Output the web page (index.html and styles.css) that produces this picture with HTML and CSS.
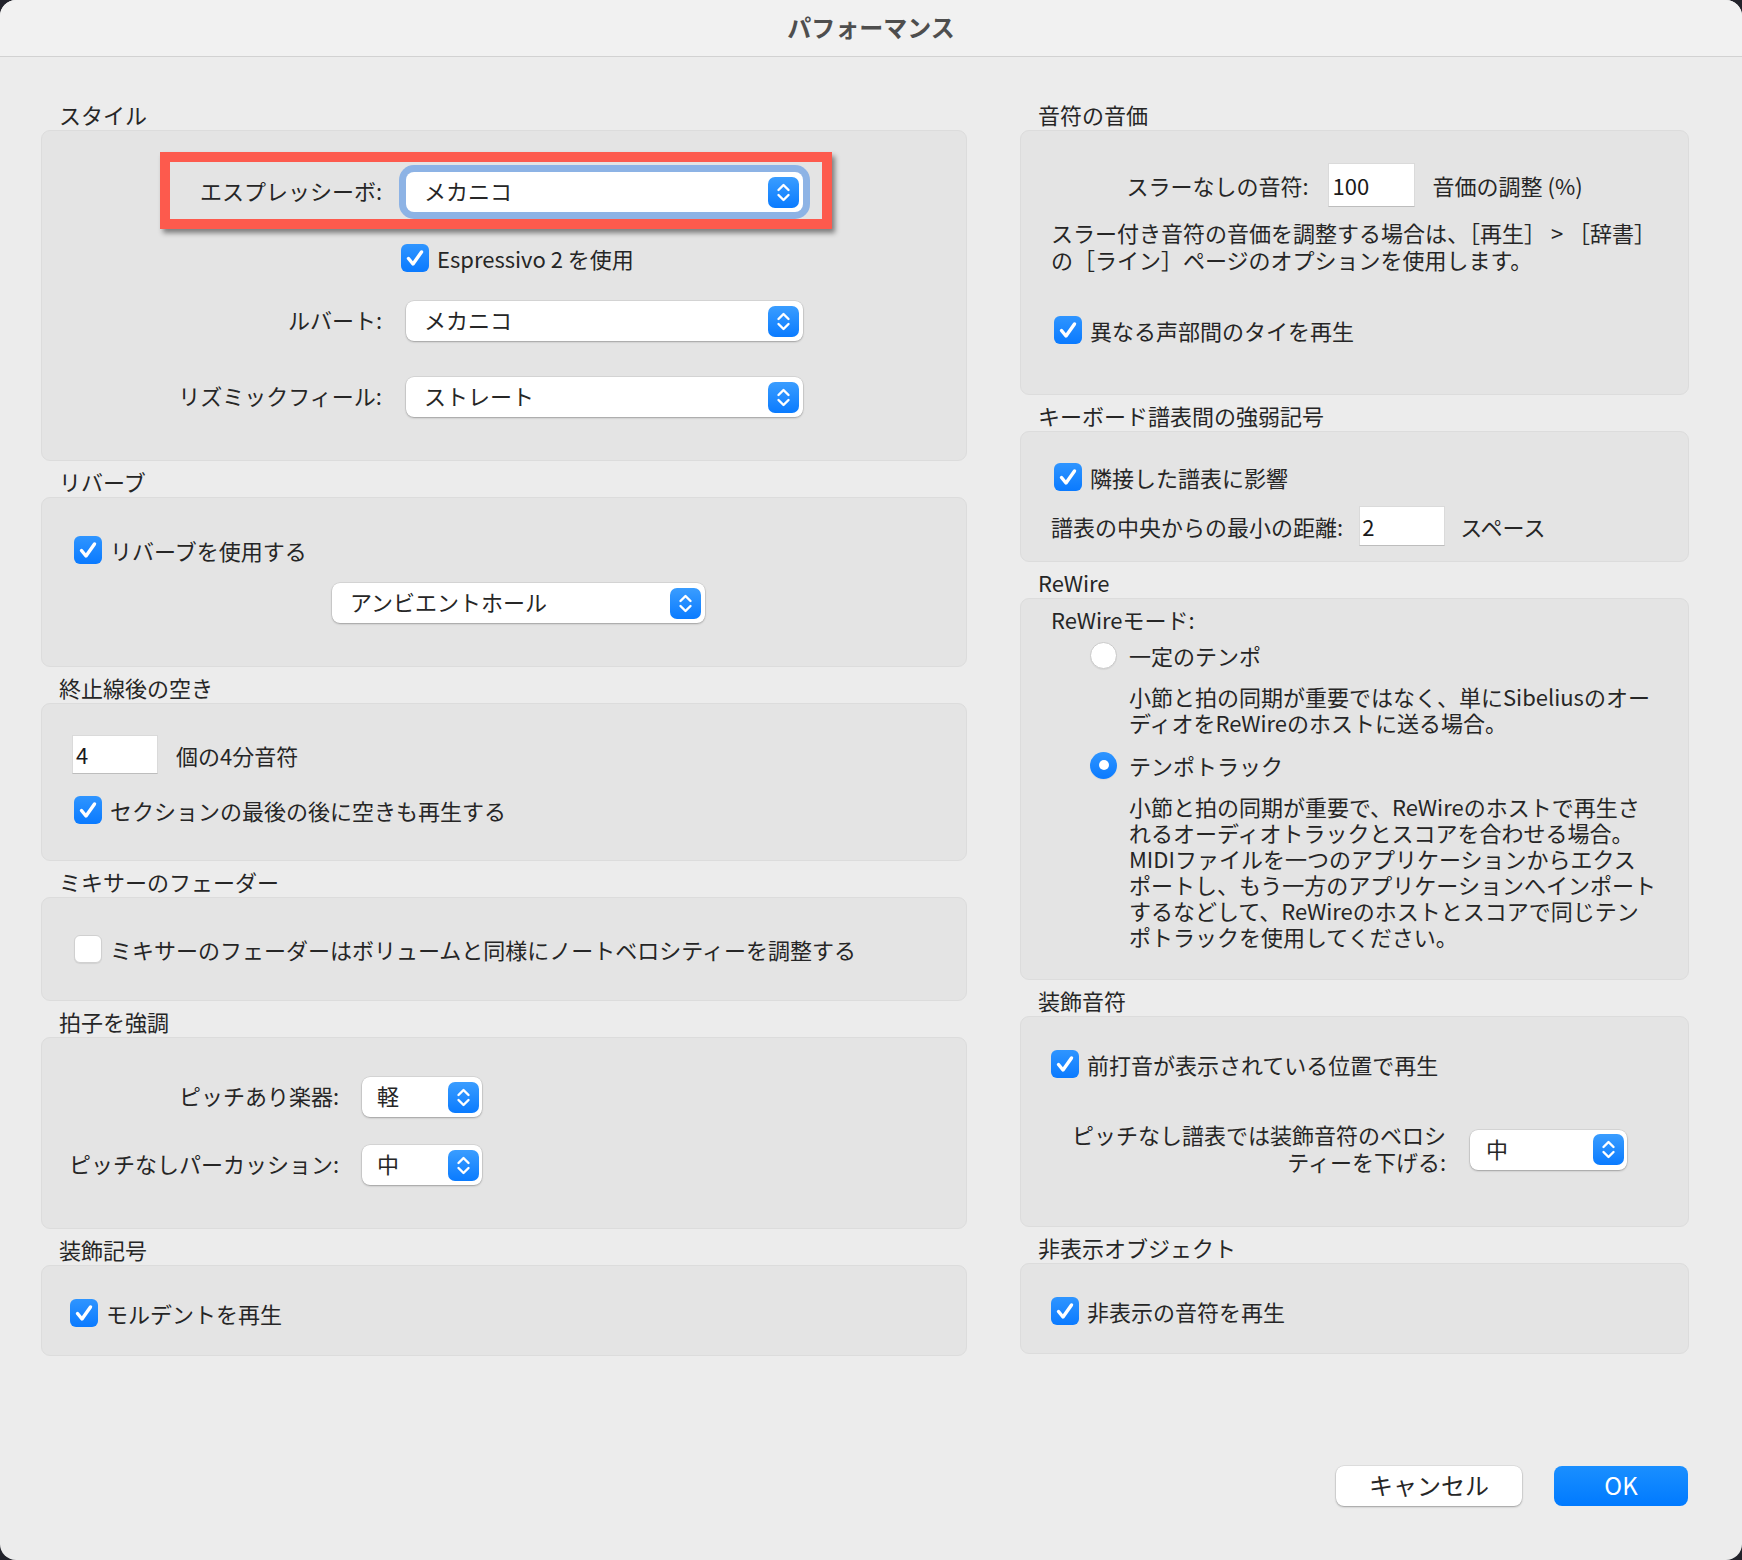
FILE: index.html
```html
<!DOCTYPE html>
<html lang="ja">
<head>
  <meta charset="utf-8">
  <title>パフォーマンス</title>
  <link rel="stylesheet" href="styles.css">
</head>
<body>
  <div class="window">
    <div class="titlebar">パフォーマンス</div>

    <div class="content">
      <!-- left column -->
      <div class="column">
        <div class="section-title">スタイル</div>
        <div class="group group-style">
          <div class="highlight"></div>
          <div class="form-grid style-grid">
            <span class="row-label">エスプレッシーボ:</span>
            <div class="select focused">
              <span>メカニコ</span>
              <span class="stepper"><svg width="31" height="31" viewBox="0 0 31 31"><polyline points="10.5,13 15.5,8 20.5,13"/><polyline points="10.5,18 15.5,23 20.5,18"/></svg></span>
            </div>

            <span></span>
            <label class="check espressivo">
              <span class="box checked"><svg width="28" height="28" viewBox="0 0 28 28"><path d="M7.5 14.5 L12 20 L20.5 8"/></svg></span>
              Espressivo 2 を使用
            </label>

            <span class="row-label">ルバート:</span>
            <div class="select">
              <span>メカニコ</span>
              <span class="stepper"><svg width="31" height="31" viewBox="0 0 31 31"><polyline points="10.5,13 15.5,8 20.5,13"/><polyline points="10.5,18 15.5,23 20.5,18"/></svg></span>
            </div>

            <span class="row-label">リズミックフィール:</span>
            <div class="select">
              <span>ストレート</span>
              <span class="stepper"><svg width="31" height="31" viewBox="0 0 31 31"><polyline points="10.5,13 15.5,8 20.5,13"/><polyline points="10.5,18 15.5,23 20.5,18"/></svg></span>
            </div>
          </div>
        </div>

        <div class="section-title">リバーブ</div>
        <div class="group group-reverb">
          <label class="check">
            <span class="box checked"><svg width="28" height="28" viewBox="0 0 28 28"><path d="M7.5 14.5 L12 20 L20.5 8"/></svg></span>
            リバーブを使用する
          </label>
          <div class="select reverb-select">
            <span>アンビエントホール</span>
            <span class="stepper"><svg width="31" height="31" viewBox="0 0 31 31"><polyline points="10.5,13 15.5,8 20.5,13"/><polyline points="10.5,18 15.5,23 20.5,18"/></svg></span>
          </div>
        </div>

        <div class="section-title">終止線後の空き</div>
        <div class="group group-gap">
          <div class="inline-row">
            <span class="field">4</span>
            <span>個の4分音符</span>
          </div>
          <label class="check gap-check">
            <span class="box checked"><svg width="28" height="28" viewBox="0 0 28 28"><path d="M7.5 14.5 L12 20 L20.5 8"/></svg></span>
            セクションの最後の後に空きも再生する
          </label>
        </div>

        <div class="section-title">ミキサーのフェーダー</div>
        <div class="group group-mixer">
          <label class="check">
            <span class="box"></span>
            ミキサーのフェーダーはボリュームと同様にノートベロシティーを調整する
          </label>
        </div>

        <div class="section-title">拍子を強調</div>
        <div class="group group-accent">
          <div class="form-grid accent-grid">
            <span class="row-label">ピッチあり楽器:</span>
            <div class="select small-select">
              <span>軽</span>
              <span class="stepper"><svg width="31" height="31" viewBox="0 0 31 31"><polyline points="10.5,13 15.5,8 20.5,13"/><polyline points="10.5,18 15.5,23 20.5,18"/></svg></span>
            </div>
            <span class="row-label">ピッチなしパーカッション:</span>
            <div class="select small-select">
              <span>中</span>
              <span class="stepper"><svg width="31" height="31" viewBox="0 0 31 31"><polyline points="10.5,13 15.5,8 20.5,13"/><polyline points="10.5,18 15.5,23 20.5,18"/></svg></span>
            </div>
          </div>
        </div>

        <div class="section-title">装飾記号</div>
        <div class="group group-single group-mordent">
          <label class="check">
            <span class="box checked"><svg width="28" height="28" viewBox="0 0 28 28"><path d="M7.5 14.5 L12 20 L20.5 8"/></svg></span>
            モルデントを再生
          </label>
        </div>
      </div>

      <!-- right column -->
      <div class="column">
        <div class="section-title">音符の音価</div>
        <div class="group group-duration">
          <div class="inline-row centered">
            <span>スラーなしの音符:</span>
            <span class="field field-tall">100</span>
            <span>音価の調整 (%)</span>
          </div>
          <p class="note">スラー付き音符の音価を調整する場合は、［再生］ > ［辞書］<br>の［ライン］ページのオプションを使用します。</p>
          <label class="check tie-check">
            <span class="box checked"><svg width="28" height="28" viewBox="0 0 28 28"><path d="M7.5 14.5 L12 20 L20.5 8"/></svg></span>
            異なる声部間のタイを再生
          </label>
        </div>

        <div class="section-title">キーボード譜表間の強弱記号</div>
        <div class="group group-keyboard">
          <label class="check tie-check">
            <span class="box checked"><svg width="28" height="28" viewBox="0 0 28 28"><path d="M7.5 14.5 L12 20 L20.5 8"/></svg></span>
            隣接した譜表に影響
          </label>
          <div class="inline-row distance-row">
            <span>譜表の中央からの最小の距離:</span>
            <span class="field">2</span>
            <span>スペース</span>
          </div>
        </div>

        <div class="section-title">ReWire</div>
        <div class="group group-rewire">
          <div class="rewire-heading">ReWireモード:</div>
          <label class="radio-row">
            <span class="radio"></span>
            一定のテンポ
          </label>
          <p class="desc">小節と拍の同期が重要ではなく、単にSibeliusのオー<br>ディオをReWireのホストに送る場合。</p>
          <label class="radio-row second">
            <span class="radio selected"></span>
            テンポトラック
          </label>
          <p class="desc">小節と拍の同期が重要で、ReWireのホストで再生さ<br>れるオーディオトラックとスコアを合わせる場合。<br>MIDIファイルを一つのアプリケーションからエクス<br>ポートし、もう一方のアプリケーションへインポート<br>するなどして、ReWireのホストとスコアで同じテン<br>ポトラックを使用してください。</p>
        </div>

        <div class="section-title">装飾音符</div>
        <div class="group group-grace">
          <label class="check">
            <span class="box checked"><svg width="28" height="28" viewBox="0 0 28 28"><path d="M7.5 14.5 L12 20 L20.5 8"/></svg></span>
            前打音が表示されている位置で再生
          </label>
          <div class="grace-row">
            <span class="grace-label">ピッチなし譜表では装飾音符のベロシ<br>ティーを下げる:</span>
            <div class="select grace-select">
              <span>中</span>
              <span class="stepper"><svg width="31" height="31" viewBox="0 0 31 31"><polyline points="10.5,13 15.5,8 20.5,13"/><polyline points="10.5,18 15.5,23 20.5,18"/></svg></span>
            </div>
          </div>
        </div>

        <div class="section-title">非表示オブジェクト</div>
        <div class="group group-single group-hidden">
          <label class="check">
            <span class="box checked"><svg width="28" height="28" viewBox="0 0 28 28"><path d="M7.5 14.5 L12 20 L20.5 8"/></svg></span>
            非表示の音符を再生
          </label>
        </div>
      </div>
    </div>

    <div class="footer">
      <button class="btn btn-cancel">キャンセル</button>
      <button class="btn btn-ok">OK</button>
    </div>
  </div>
</body>
</html>
```

FILE: styles.css
```css
html, body {
  margin: 0;
  padding: 0;
}

body {
  background-color: #22232b;
  font-family: "Noto Sans CJK JP", "Noto Sans", sans-serif;
  font-size: 22px;
  color: #262626;
}

.window {
  width: 1742px;
  height: 1560px;
  background-color: #ececec;
  border-radius: 16px;
  overflow: hidden;
  display: flex;
  flex-direction: column;
}

.titlebar {
  height: 56px;
  line-height: 54px;
  border-bottom: 1px solid #d2d2d2;
  background-color: #f1f1f1;
  text-align: center;
  font-size: 24px;
  font-weight: 700;
  color: #4e4e4e;
}

.content {
  display: grid;
  grid-template-columns: 926px 669px;
  column-gap: 53px;
  padding: 37px 53px 0 41px;
}

.column {
  display: flex;
  flex-direction: column;
}

.section-title {
  height: 36px;
  box-sizing: border-box;
  padding: 6px 0 0 18px;
  line-height: 28px;
}

.group {
  position: relative;
  background-color: #e4e4e4;
  border: 1px solid #dcdcdc;
  border-radius: 9px;
}

/* shared controls */

.row-label {
  text-align: right;
  white-space: nowrap;
}

.select {
  height: 40px;
  box-sizing: border-box;
  display: flex;
  align-items: center;
  justify-content: space-between;
  padding: 0 4px 0 18px;
  line-height: 36px;
  background-color: #fff;
  border-radius: 8px;
  box-shadow: 0 1px 2px rgba(0, 0, 0, 0.25), 0 0 0 0.5px rgba(0, 0, 0, 0.12);
}

.select > span:first-child {
  margin-bottom: 4px;
}

.select.focused {
  box-shadow: 0 0 0 7px rgba(70, 138, 230, 0.55);
}

.stepper {
  width: 31px;
  height: 31px;
  border-radius: 7px;
  background: linear-gradient(#3a9dff, #0a7bff);
  display: flex;
}

.stepper svg polyline {
  fill: none;
  stroke: #fff;
  stroke-width: 2.4;
  stroke-linecap: round;
  stroke-linejoin: round;
}

.check {
  display: flex;
  width: fit-content;
  align-items: center;
  gap: 8px;
  height: 28px;
  line-height: 28px;
  white-space: nowrap;
}

.box {
  width: 28px;
  height: 28px;
  box-sizing: border-box;
  border-radius: 6px;
  background-color: #fff;
  border: 1px solid #d0d0d0;
  box-shadow: 0 1px 1px rgba(0, 0, 0, 0.08);
  flex-shrink: 0;
}

.box.checked {
  border: none;
  background: linear-gradient(#2f95ff, #0a7aff);
  box-shadow: none;
}

.box svg path {
  fill: none;
  stroke: #fff;
  stroke-width: 3.4;
  stroke-linecap: round;
  stroke-linejoin: round;
}

.field {
  display: inline-block;
  width: 86px;
  height: 39px;
  box-sizing: border-box;
  padding-left: 3px;
  line-height: 37px;
  background-color: #fff;
  border: 1px solid #dadada;
  border-bottom-color: #bdbdbd;
  color: #1a1a1a;
}

.inline-row {
  display: flex;
  align-items: center;
  gap: 18px;
  white-space: nowrap;
}

.form-grid {
  display: grid;
}

/* スタイル */

.group-style {
  padding: 41px 0 43px 0;
}

.style-grid {
  grid-template-columns: 340px 397px;
  grid-template-rows: 72px 57px 76px 40px;
  column-gap: 24px;
}

.style-grid .row-label {
  line-height: 36px;
}

.espressivo {
  margin-left: -5px;
}

.highlight {
  position: absolute;
  left: 118px;
  top: 21px;
  width: 672px;
  height: 77px;
  box-sizing: border-box;
  border: 10px solid #fd5a4d;
  box-shadow: 3px 4px 5px rgba(0, 0, 0, 0.45);
  pointer-events: none;
}

/* リバーブ */

.group-reverb {
  display: flex;
  flex-direction: column;
  align-items: flex-start;
  padding: 38px 0 43px 32px;
}

.reverb-select {
  width: 373px;
  margin: 19px 0 0 258px;
}

/* 終止線後の空き */

.group-gap {
  display: flex;
  flex-direction: column;
  align-items: flex-start;
  padding: 31px 0 36px 30px;
}

.gap-check {
  margin: 22px 0 0 2px;
}

/* ミキサー */

.group-mixer {
  padding: 37px 0 37px 32px;
}

/* 拍子を強調 */

.group-accent {
  padding: 39px 0 43px 0;
}

.accent-grid {
  grid-template-columns: 297px 120px;
  column-gap: 23px;
  row-gap: 28px;
  align-items: center;
}

.accent-grid .row-label {
  padding-bottom: 4px;
}

.small-select {
  padding-left: 15px;
  padding-right: 3px;
}

/* single checkbox groups */

.group-single {
  padding: 33px 0 28px 28px;
}

.group-hidden {
  padding-left: 30px;
}

/* 音符の音価 */

.group-duration {
  display: flex;
  flex-direction: column;
  align-items: flex-start;
  padding: 32px 30px 50px 30px;
}

.centered {
  align-self: stretch;
  justify-content: center;
}

.centered .field {
  margin: 0 0 0 1px;
}

.field-tall {
  width: 87px;
  height: 44px;
  line-height: 42px;
  padding-left: 4px;
}

.note {
  margin: 12px 0 0 0;
  line-height: 27px;
  white-space: nowrap;
}

.tie-check {
  margin: 43px 0 0 3px;
}

/* キーボード譜表間 */

.group-keyboard {
  display: flex;
  flex-direction: column;
  align-items: flex-start;
  padding: 31px 30px 15px 30px;
}

.group-keyboard .tie-check {
  margin-top: 0;
}

.distance-row {
  margin-top: 15px;
  gap: 15px;
}

.distance-row .field {
  height: 40px;
  line-height: 38px;
  padding-left: 2px;
  margin-left: 1px;
}

/* ReWire */

.group-rewire {
  padding: 7px 30px 30px 30px;
}

.rewire-heading {
  line-height: 27px;
}

.radio-row {
  display: flex;
  align-items: center;
  gap: 12px;
  height: 28px;
  margin: 8px 0 0 39px;
}

.radio-row.second {
  margin-top: 16px;
}

.radio {
  width: 27px;
  height: 27px;
  box-sizing: border-box;
  border-radius: 50%;
  background-color: #fff;
  border: 1px solid #cacaca;
  box-shadow: 0 1px 1px rgba(0, 0, 0, 0.06);
  display: flex;
  align-items: center;
  justify-content: center;
}

.radio.selected {
  border: none;
  background: linear-gradient(#2f95ff, #0a7aff);
}

.radio.selected::after {
  content: "";
  width: 10px;
  height: 10px;
  border-radius: 50%;
  background-color: #fff;
}

.desc {
  margin: 14px 0 0 78px;
  line-height: 26px;
  white-space: nowrap;
}

/* 装飾音符 */

.group-grace {
  display: flex;
  flex-direction: column;
  align-items: flex-start;
  padding: 33px 30px 48px 30px;
}

.grace-row {
  display: flex;
  align-items: center;
  gap: 24px;
  margin: 43px 0 0 21px;
}

.grace-label {
  width: 374px;
  text-align: right;
  line-height: 27px;
  white-space: nowrap;
  padding-bottom: 3px;
}

.grace-select {
  width: 157px;
  padding-left: 16px;
  padding-right: 3px;
}

/* footer */

.footer {
  margin-top: auto;
  display: flex;
  justify-content: flex-end;
  gap: 32px;
  padding: 0 54px 54px 0;
}

.btn {
  height: 40px;
  border: none;
  border-radius: 8px;
  font-family: "Noto Sans CJK JP", "Noto Sans", sans-serif;
  font-size: 24px;
  line-height: 36px;
  padding: 0 0 3px 0;
}

.btn-cancel {
  width: 186px;
  background-color: #fff;
  color: #262626;
  box-shadow: 0 1px 2px rgba(0, 0, 0, 0.3), 0 0 0 0.5px rgba(0, 0, 0, 0.1);
}

.btn-ok {
  width: 134px;
  background: linear-gradient(#1a8fff, #007aff);
  color: #fff;
}
```
